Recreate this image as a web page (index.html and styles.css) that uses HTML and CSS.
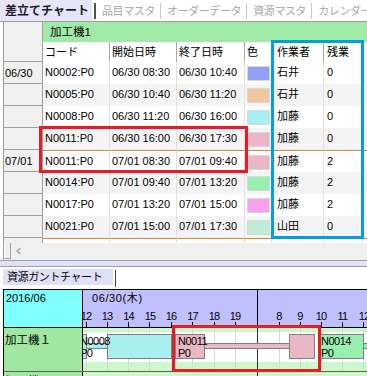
FILE: index.html
```html
<!DOCTYPE html>
<html lang="ja">
<head>
<meta charset="utf-8">
<title>差立てチャート</title>
<link rel="stylesheet" href="styles.css">
</head>
<body>
<div class="tabs">
  <div class="tab active">差立てチャート</div>
  <div class="sep dark"></div>
  <div class="tab">品目マスタ</div>
  <div class="sep"></div>
  <div class="tab">オーダーデータ</div>
  <div class="sep"></div>
  <div class="tab">資源マスタ</div>
  <div class="sep"></div>
  <div class="tab">カレンダー</div>
</div>

<div class="sheet">
  <div class="grid">
    <div class="head">
      <div class="corner"></div>
      <div class="headcols">
        <div class="group">加工機1</div>
        <div class="hrow">
          <div class="h c-code">コード</div>
          <div class="h c-st">開始日時</div>
          <div class="h c-en">終了日時</div>
          <div class="h c-col">色</div>
          <div class="h c-wk">作業者</div>
          <div class="h c-ot">残業</div>
          <div class="h c-fill"></div>
        </div>
      </div>
    </div>

    <div class="row">
      <div class="c c-date">06/30</div>
      <div class="c c-code">N0002:P0</div>
      <div class="c c-st">06/30 08:30</div>
      <div class="c c-en">06/30 10:40</div>
      <div class="c c-col"><span class="sw sw-blue"></span></div>
      <div class="c c-wk">石井</div>
      <div class="c c-ot">0</div>
      <div class="c c-fill"></div>
    </div>
    <div class="row alt">
      <div class="c c-date"></div>
      <div class="c c-code">N0005:P0</div>
      <div class="c c-st">06/30 10:40</div>
      <div class="c c-en">06/30 11:20</div>
      <div class="c c-col"><span class="sw sw-peach"></span></div>
      <div class="c c-wk">石井</div>
      <div class="c c-ot">0</div>
      <div class="c c-fill"></div>
    </div>
    <div class="row">
      <div class="c c-date"></div>
      <div class="c c-code">N0008:P0</div>
      <div class="c c-st">06/30 11:20</div>
      <div class="c c-en">06/30 16:00</div>
      <div class="c c-col"><span class="sw sw-cyan"></span></div>
      <div class="c c-wk">加藤</div>
      <div class="c c-ot">0</div>
      <div class="c c-fill"></div>
    </div>
    <div class="row alt">
      <div class="c c-date"></div>
      <div class="c c-code">N0011:P0</div>
      <div class="c c-st">06/30 16:00</div>
      <div class="c c-en">06/30 17:30</div>
      <div class="c c-col"><span class="sw sw-pink"></span></div>
      <div class="c c-wk">加藤</div>
      <div class="c c-ot">0</div>
      <div class="c c-fill"></div>
    </div>
    <div class="row brk">
      <div class="c c-date">07/01</div>
      <div class="c c-code">N0011:P0</div>
      <div class="c c-st">07/01 08:30</div>
      <div class="c c-en">07/01 09:40</div>
      <div class="c c-col"><span class="sw sw-pink"></span></div>
      <div class="c c-wk">加藤</div>
      <div class="c c-ot">2</div>
      <div class="c c-fill"></div>
    </div>
    <div class="row alt">
      <div class="c c-date"></div>
      <div class="c c-code">N0014:P0</div>
      <div class="c c-st">07/01 09:40</div>
      <div class="c c-en">07/01 13:20</div>
      <div class="c c-col"><span class="sw sw-green"></span></div>
      <div class="c c-wk">加藤</div>
      <div class="c c-ot">2</div>
      <div class="c c-fill"></div>
    </div>
    <div class="row">
      <div class="c c-date"></div>
      <div class="c c-code">N0017:P0</div>
      <div class="c c-st">07/01 13:20</div>
      <div class="c c-en">07/01 15:00</div>
      <div class="c c-col"><span class="sw sw-magenta"></span></div>
      <div class="c c-wk">加藤</div>
      <div class="c c-ot">2</div>
      <div class="c c-fill"></div>
    </div>
    <div class="row alt">
      <div class="c c-date"></div>
      <div class="c c-code">N0021:P0</div>
      <div class="c c-st">07/01 15:00</div>
      <div class="c c-en">07/01 17:30</div>
      <div class="c c-col"><span class="sw sw-mint"></span></div>
      <div class="c c-wk">山田</div>
      <div class="c c-ot">0</div>
      <div class="c c-fill"></div>
    </div>
    <div class="row tail">
      <div class="c c-date"></div>
      <div class="c c-code"></div>
      <div class="c c-st"></div>
      <div class="c c-en"></div>
      <div class="c c-col"></div>
      <div class="c c-wk"></div>
      <div class="c c-ot"></div>
      <div class="c c-fill"></div>
    </div>

    <div class="hscroll">
      <div class="grip"></div>
      <svg class="arrow" width="8" height="8" viewBox="0 0 8 8"><polyline points="5.5,1 2,4 5.5,7" fill="none" stroke="#a8a8a8" stroke-width="1.6"/></svg>
    </div>
  </div>
</div>

<div class="splitter"></div>

<div class="gtabs">
  <div class="gtab">資源ガントチャート</div>
  <div class="gsep"></div>
</div>

<div class="gantt">
  <div class="gh">
    <div class="gh-left">2016/06</div>
    <div class="gh-time">
      <div class="gdate">06/30(木)</div>
      <span class="hl" style="left:3px">12</span>
      <span class="hl" style="left:24px">13</span>
      <span class="hl" style="left:45.5px">14</span>
      <span class="hl" style="left:67px">15</span>
      <span class="hl" style="left:88px">16</span>
      <span class="hl" style="left:109.5px">17</span>
      <span class="hl" style="left:131px">18</span>
      <span class="hl" style="left:152px">19</span>
      <span class="hl" style="left:196px">8</span>
      <span class="hl" style="left:217px">9</span>
      <span class="hl" style="left:238px">10</span>
      <span class="hl" style="left:259.5px">11</span>
      <span class="hl" style="left:281px">12</span>
      <span class="tick" style="left:3px"></span>
      <span class="tick" style="left:24px"></span>
      <span class="tick" style="left:45px"></span>
      <span class="tick" style="left:66px"></span>
      <span class="tick" style="left:88px"></span>
      <span class="tick" style="left:109px"></span>
      <span class="tick" style="left:131px"></span>
      <span class="tick" style="left:152px"></span>
      <span class="tick" style="left:196px"></span>
      <span class="tick" style="left:217px"></span>
      <span class="tick" style="left:238px"></span>
      <span class="tick" style="left:259px"></span>
      <span class="tick" style="left:280px"></span>
      <span class="dayline"></span>
    </div>
  </div>

  <div class="grow">
    <div class="gr-left">加工機１</div>
    <div class="gr-time">
      <span class="gl" style="left:3px"></span>
      <span class="gl" style="left:24px"></span>
      <span class="gl" style="left:45px"></span>
      <span class="gl" style="left:66px"></span>
      <span class="gl" style="left:88px"></span>
      <span class="gl" style="left:109px"></span>
      <span class="gl" style="left:131px"></span>
      <span class="gl" style="left:152px"></span>
      <span class="gl" style="left:196px"></span>
      <span class="gl" style="left:217px"></span>
      <span class="gl" style="left:238px"></span>
      <span class="gl" style="left:259px"></span>
      <span class="gl" style="left:280px"></span>
      <span class="gl day"></span>

      <span class="link lk-cyan" style="left:3px;width:22px"></span>
      <span class="bar b-cyan" style="left:-12px;width:16px"></span>
      <span class="bar b-cyan" style="left:24px;width:65px"></span>
      <span class="lbl" style="left:-3px">N0008
P0</span>

      <span class="link lk-pink" style="left:121px;width:86px"></span>
      <span class="bar b-pink" style="left:92px;width:30px"></span>
      <span class="bar b-pink" style="left:206px;width:26px"></span>
      <span class="lbl" style="left:95px">N0011
P0</span>

      <span class="link lk-green" style="left:280px;width:20px"></span>
      <span class="bar b-green" style="left:237px;width:44px"></span>
      <span class="lbl" style="left:238px">N0014
P0</span>
    </div>
  </div>

  <div class="grow">
    <div class="gr-left next">加工機２</div>
    <div class="gr-time">
      <span class="gl day"></span>
    </div>
  </div>
</div>

<div class="mark red1"></div>
<div class="mark blue1"></div>
<div class="mark red2"></div>
</body>
</html>
```

FILE: styles.css
```css
* { box-sizing: border-box; }
html, body { margin: 0; padding: 0; background: #fff; }
body {
  width: 367px;
  height: 376px;
  overflow: hidden;
  position: relative;
  font-family: "Liberation Sans", "Noto Sans CJK JP", sans-serif;
  font-size: 11px;
  color: #000;
}

/* top tabs */
.tabs {
  display: flex;
  height: 21px;
  white-space: nowrap;
  overflow: hidden;
  font-family: "Noto Sans CJK JP", sans-serif;
}
.tab {
  padding: 0 5px 0 6px;
  line-height: 20px;
  font-size: 11px;
  letter-spacing: -0.4px;
  color: #a8a8a8;
}
.tab.active {
  width: 92px;
  flex: none;
  padding-left: 5px;
  background: #e6e6f8;
  color: #1c1c2c;
  font-weight: bold;
  font-size: 12px;
  letter-spacing: 0;
}
.sep { flex: none; width: 1px; margin: 3px 0 2px; background: #c8c8c8; }
.sep.dark { width: 2px; margin-left: 2px; background: #505050; }

/* sheet grid */
.sheet { border-top: 1px solid #a0a0a0; padding-left: 3px; }
.grid { border-left: 1px solid #a0a0a0; }
.head { display: flex; height: 40px; }
.corner {
  width: 39px;
  flex: none;
  background: #f0f0f0;
  border-right: 1px solid #a0a0a0;
  border-bottom: 1px solid #a0a0a0;
}
.headcols { flex: 1; display: flex; flex-direction: column; }
.group {
  height: 20px;
  background: #a0eaa8;
  padding-left: 7px;
  line-height: 20px;
  font-size: 11.5px;
}
.hrow { display: flex; height: 20px; }
.h {
  flex: none;
  border-right: 1px solid #a8a8a8;
  line-height: 20px;
  padding-left: 2px;
  white-space: nowrap;
}

.c-date { width: 39px; }
.c-code { width: 67px; }
.c-st { width: 67px; }
.c-en { width: 68px; }
.c-col { width: 27px; }
.c-wk { width: 52px; padding-left: 5px !important; }
.c-ot { width: 39px; padding-left: 3px !important; }
.c-fill { flex: 1 !important; border-right: none !important; }

.row { display: flex; height: 22px; }
.c {
  flex: none;
  background: #fff;
  border-right: 1px solid #e2e2e2;
  line-height: 21px;
  padding-left: 2px;
  white-space: nowrap;
}
.row.alt .c { background: #f4f4f4; }
.row .c.c-date {
  background: #f0f0f0;
  border-right: 1px solid #a0a0a0;
  border-bottom: 1px solid #a0a0a0;
  padding-left: 1px;
  line-height: 23px;
}
.row.brk .c:not(.c-date) { border-top: 1px solid #d4883c; line-height: 20px; }
.row.tail { height: 5px; }
.row.tail .c:not(.c-date) { border-top: 1px solid #d4883c; }
.row.tail .c.c-date { border-bottom: none; }

.sw {
  display: block;
  margin: 4px 0 0 0;
  width: 23px;
  height: 15px;
  border: 1px solid #d8d8d8;
}
.sw-blue { background: #90a0f8; }
.sw-peach { background: #f0c8a0; }
.sw-cyan { background: #a8f0f0; }
.sw-pink { background: #e8b8c8; }
.sw-green { background: #98f0b0; }
.sw-magenta { background: #f8a0f0; }
.sw-mint { background: #c0ecd4; }

.hscroll {
  display: flex;
  align-items: center;
  height: 17px;
  background: #f0f0f0;
}
.grip {
  align-self: stretch;
  width: 7px;
  margin-bottom: 1px;
  border-left: 1px solid #fff;
  border-right: 1px solid #a0a0a0;
  border-bottom: 1px solid #a0a0a0;
}
.arrow { margin-left: 4px; margin-top: -2px; }

.splitter {
  height: 7px;
  background: #e0e0f8;
  border-top: 1px solid #a0a0a0;
  border-bottom: 1px solid #a0a0a0;
}

/* gantt tabs */
.gtabs { display: flex; align-items: flex-start; height: 22px; padding-left: 3px; }
.gtab {
  margin-top: 2px;
  width: 110px;
  height: 16px;
  background: #e0e0f8;
  padding-left: 4px;
  line-height: 15px;
  font-family: "Noto Sans CJK JP", sans-serif;
  font-size: 11px;
  letter-spacing: -0.4px;
  white-space: nowrap;
}
.gsep { margin: 3px 0 0 2px; width: 1px; height: 17px; background: #404040; }

/* gantt */
.gantt {
  margin-left: 3px;
  border-left: 1px solid #000;
  border-top: 1px solid #000;
}
.gh { display: flex; height: 38px; border-bottom: 1px solid #000; }
.gh-left {
  width: 79px;
  flex: none;
  background: #80ffff;
  border-right: 1px solid #000;
  padding: 2px 0 0 2px;
  line-height: 12px;
}
.gh-time {
  flex: 1;
  position: relative;
  overflow: hidden;
  background: #c0c0ff;
}
.gdate {
  position: absolute;
  left: 9px;
  top: 2px;
  line-height: 12px;
  letter-spacing: 0.6px;
}
.hl {
  position: absolute;
  top: 20px;
  line-height: 12px;
  letter-spacing: -0.8px;
  transform: translateX(-50%);
}
.tick {
  position: absolute;
  bottom: 0;
  width: 1px;
  height: 5px;
  background: #000;
}
.dayline {
  position: absolute;
  left: 174px;
  top: 0;
  bottom: 0;
  width: 1px;
  background: #000;
}

.grow { display: flex; height: 44px; border-bottom: 1px solid #606060; }
.gr-left {
  width: 79px;
  flex: none;
  background: #a0e8a0;
  border-right: 1px solid #000;
  padding: 3px 0 0 1px;
  font-family: "Noto Sans CJK JP", sans-serif;
  font-size: 11.5px;
  line-height: 16px;
}
.gr-left.next { padding-top: 0; }
.gr-time {
  flex: 1;
  position: relative;
  overflow: hidden;
  background: linear-gradient(#ccf8cc 0 4px, #fff 4px 34px, #ccf8cc 34px);
}
.gl {
  position: absolute;
  top: 0;
  bottom: 0;
  width: 1px;
  background: #d8d8d8;
}
.gl.day { left: 174px; background: #303030; }

.bar {
  position: absolute;
  top: 6px;
  height: 25px;
  border: 1px solid #808080;
}
.link {
  position: absolute;
  top: 15px;
  height: 6px;
  border: 1px solid #808080;
}
.b-cyan, .lk-cyan { background: #a8f0f0; }
.b-pink, .lk-pink { background: #e8b8c4; }
.b-green, .lk-green { background: #98f0b0; }
.lbl {
  position: absolute;
  top: 7px;
  line-height: 12px;
  letter-spacing: -0.5px;
  white-space: pre;
}

/* annotation frames */
.mark { position: absolute; pointer-events: none; }
.red1 { left: 39px; top: 126px; width: 209px; height: 47px; border: 3px solid #e81c24; }
.blue1 { left: 271px; top: 40px; width: 93px; height: 199px; border: 3px solid #00a0e6; }
.red2 { left: 172px; top: 325px; width: 149px; height: 47px; border: 3px solid #e81c24; }
```
